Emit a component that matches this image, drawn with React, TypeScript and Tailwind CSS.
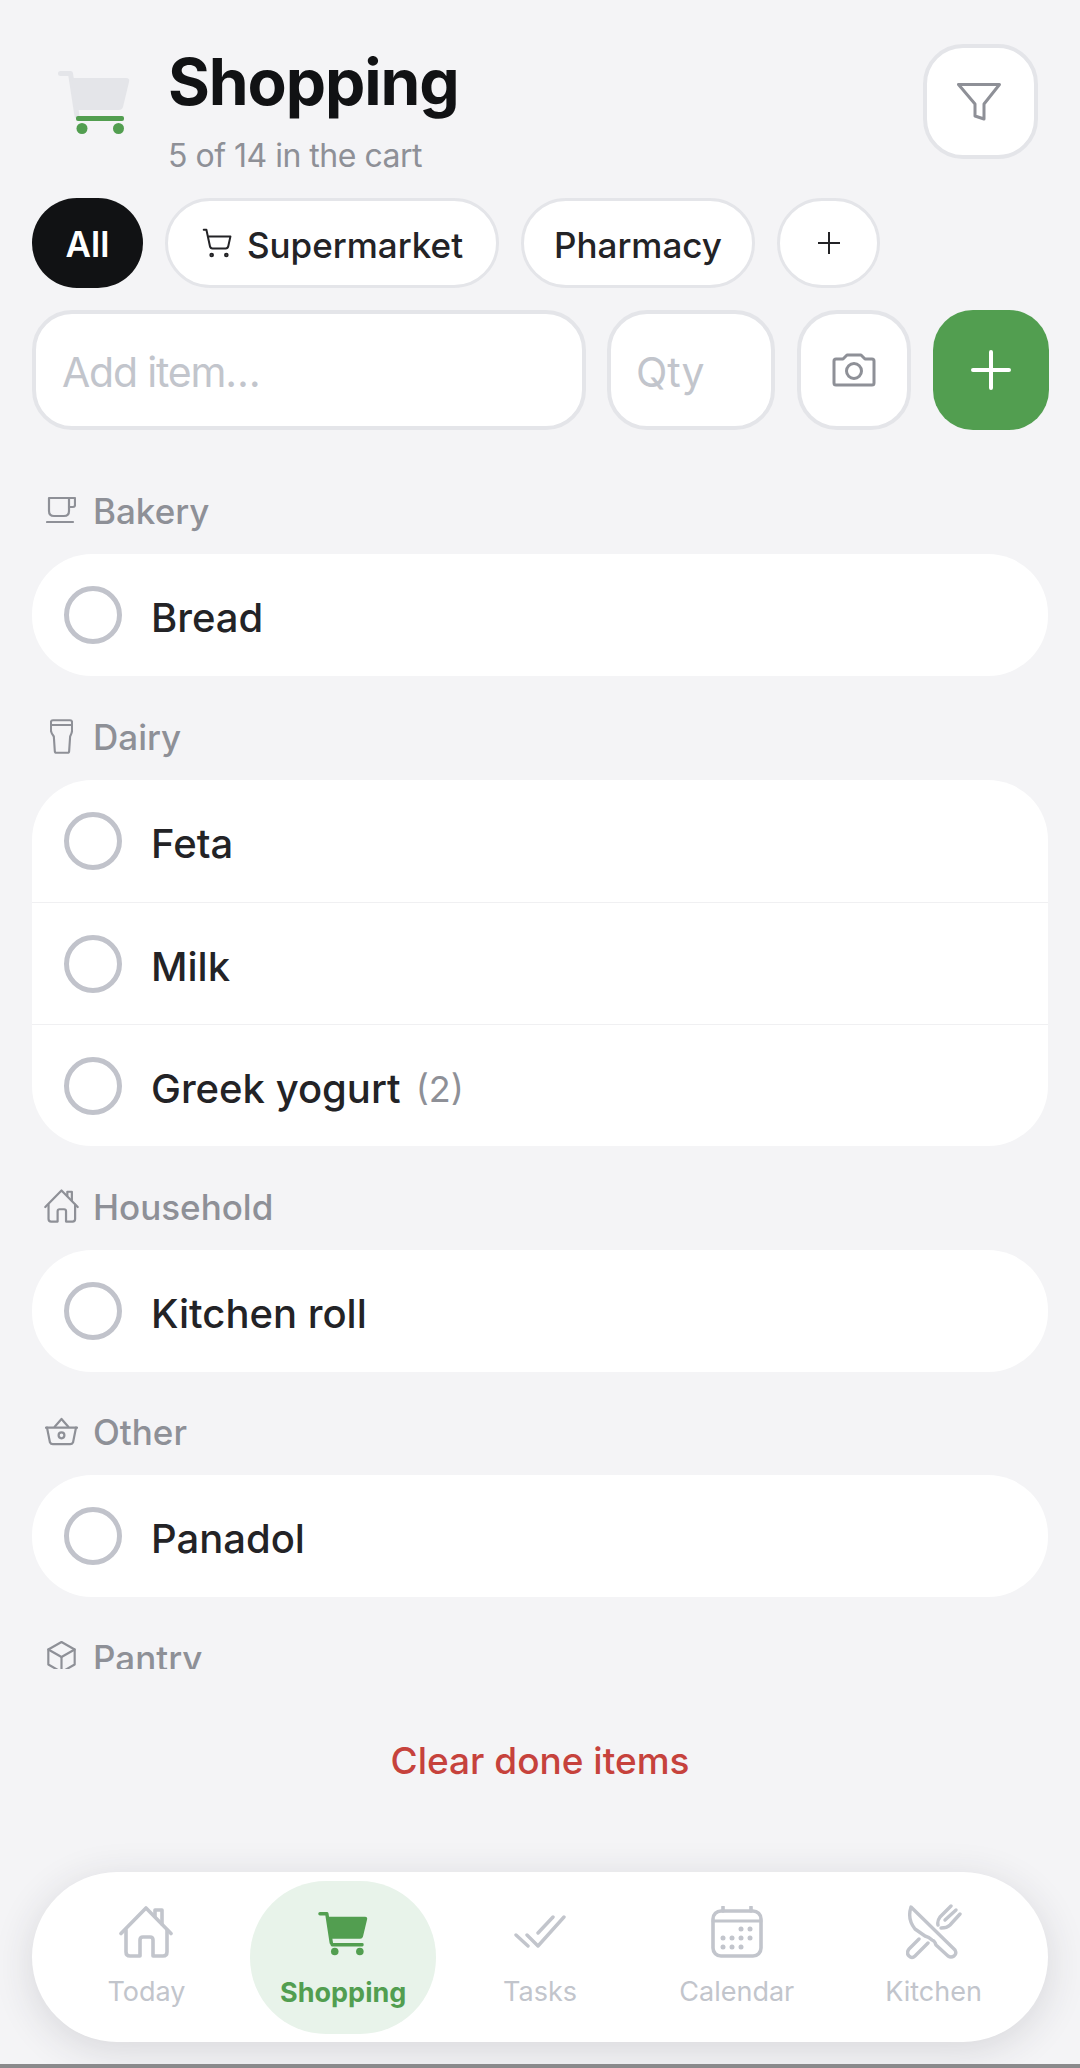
import { ShoppingCart } from "lucide-react";

const font = "font-['Inter',sans-serif]";

const CartIcon = ({ body, bar, className }: { body: string; bar: string; className: string }) => (
  <svg viewBox="0 0 72 64" className={className}>
    <path d="M2.5 2.5H12.5L19 45" fill="none" stroke={body} strokeWidth="5" strokeLinecap="round" strokeLinejoin="round" />
    <path d="M14 7H68Q72 7 71 11L65 36Q64 39 61 39H19Z" fill={body} />
    <rect x="18" y="45" width="48" height="5" rx="2" fill={bar} />
    <circle cx="24" cy="57.5" r="5.5" fill={bar} />
    <circle cx="60.5" cy="57.5" r="5.5" fill={bar} />
  </svg>
);

const HomeIcon = ({ className }: { className: string }) => (
  <svg viewBox="0 0 54 52" fill="none" stroke="currentColor" strokeWidth="3.6" strokeLinecap="round" strokeLinejoin="round" className={className}>
    <path d="M2 27.5L27 2L52 27.5" />
    <path d="M36 10.5V4H43V18" />
    <path d="M7 24V46Q7 50 11 50H21V34Q21 31 24 31H31Q34 31 34 34V50H44Q48 50 48 46V24" />
  </svg>
);

const ChecksIcon = ({ className }: { className: string }) => (
  <svg viewBox="0 0 52 34" fill="none" stroke="currentColor" strokeWidth="3.4" strokeLinecap="round" strokeLinejoin="round" className={className}>
    <path d="M2 20L14 31" />
    <path d="M13 20L24 31L50 2" />
    <path d="M24 18L39 2" />
  </svg>
);

const CalendarIcon = ({ className }: { className: string }) => (
  <svg viewBox="0 0 52 52" fill="none" stroke="currentColor" strokeWidth="3.6" strokeLinecap="round" className={className}>
    <rect x="2" y="5" width="48" height="45" rx="8" />
    <path d="M2 15H50" strokeWidth="3" />
    <path d="M12 1V5M40 1V5" />
    <g fill="currentColor" stroke="none">
      <circle cx="30" cy="23" r="2.5" /><circle cx="39" cy="23" r="2.5" />
      <circle cx="12" cy="32" r="2.5" /><circle cx="21" cy="32" r="2.5" /><circle cx="30" cy="32" r="2.5" /><circle cx="39" cy="32" r="2.5" />
      <circle cx="12" cy="41" r="2.5" /><circle cx="21" cy="41" r="2.5" /><circle cx="30" cy="41" r="2.5" />
    </g>
  </svg>
);

const KitchenIcon = ({ className }: { className: string }) => (
  <svg viewBox="0 0 56 56" fill="none" stroke="currentColor" strokeWidth="3.4" strokeLinecap="round" strokeLinejoin="round" className={className}>
    <path d="M5 3L49 46Q51 50 48 52Q45 54 42 52L30 41Q29 37 26 36Q23 33 19 32L9 25Q1 15 5 3Z" />
    <path d="M13 35L3 45Q0 49 3 52Q6 55 9 52L22 39" />
    <path d="M32 21Q31 17 34 13L45 2" />
    <path d="M39 16L50 6" />
    <path d="M35 24Q41 24 44 21L54 10" />
  </svg>
);

const CupIcon = () => (
  <svg viewBox="0 0 30 28" fill="none" stroke="currentColor" strokeWidth="2.2" strokeLinecap="round" strokeLinejoin="round" className="w-[30px] h-[28px]">
    <path d="M3 2H23V15Q23 20 18 20H8Q3 20 3 15Z" />
    <path d="M23 2H29V9Q29 11 27 11H23" />
    <path d="M1 26H27" />
  </svg>
);

const GlassIcon = () => (
  <svg viewBox="0 0 24 36" fill="none" stroke="currentColor" strokeWidth="2.2" strokeLinecap="round" strokeLinejoin="round" className="w-[23px] h-[35px]">
    <path d="M1 3Q1 1 3 1H21Q23 1 23 3V12Q23 14 21 18L20 33Q20 35 18 35H7Q5 35 5 33L4 18Q1 14 1 12Z" />
    <path d="M1 6H23" />
  </svg>
);

const HouseSmall = () => <HomeIcon className="w-[35px] h-[34px] [&_path]:[stroke-width:3.4px]" />;

const BasketIcon = () => (
  <svg viewBox="0 0 34 30" fill="none" stroke="currentColor" strokeWidth="2.3" strokeLinecap="round" strokeLinejoin="round" className="w-[33px] h-[29px]">
    <path d="M1 11H33" />
    <path d="M2 11L5 26Q6 28 8 28H26Q28 28 29 26L32 11" />
    <path d="M10 10L17 2L24 10" />
    <circle cx="17" cy="19" r="3" />
  </svg>
);

const BoxIcon = () => (
  <svg viewBox="0 0 32 34" fill="none" stroke="currentColor" strokeWidth="2.3" strokeLinecap="round" strokeLinejoin="round" className="w-[31px] h-[32px]">
    <path d="M16 1L30 9V25L16 33L2 25V9Z" />
    <path d="M2 9L16 17L30 9" />
    <path d="M16 17V33" />
  </svg>
);

const Item = ({ name, qty, divider }: { name: string; qty?: string; divider?: boolean }) => (
  <div className={`flex items-center h-[122px] pl-8 ${divider ? "border-t border-[#f0f0f2]" : ""}`}>
    <span className="w-[58px] h-[58px] rounded-full border-[5px] border-[#c1c3cb]" />
    <span className="ml-[29px] pt-[6px] text-[40px] font-[450] text-[#232326]">{name}</span>
    {qty && <span className="ml-[15px] pt-[6px] text-[36px] text-[#8e9097]">{qty}</span>}
  </div>
);

const Section = ({ icon, title, className = "mb-10", children }: { icon: React.ReactNode; title: string; className?: string; children?: React.ReactNode }) => (
  <section className={className}>
    <div className="flex items-center h-10 mb-6 text-[#8e9097]">
      <div className="w-[61px] pr-[3px] flex justify-center">{icon}</div>
      <h2 className="pt-[3px] text-[35px] font-[450]">{title}</h2>
    </div>
    {children && <div className="bg-white rounded-[60px] overflow-hidden">{children}</div>}
  </section>
);

const NavItem = ({ label, children }: { label: string; children: React.ReactNode }) => (
  <div className="flex-1 pt-[2px] flex flex-col items-center text-[#c2c5cc]">
    <div className="h-[56px] flex items-center justify-center">{children}</div>
    <span className="mt-3 text-[27px]">{label}</span>
  </div>
);

export default function App() {
  return (
    <div className={`${font} w-[1080px] h-[2068px] overflow-hidden bg-[#f4f4f6] flex flex-col`}>
      <header className="h-[198px] shrink-0 flex justify-between items-start pt-11 pl-[58px] pr-[42px]">
        <div className="flex items-start">
          <CartIcon body="#e4e5e9" bar="#529e50" className="w-[72px] h-[64px] mt-[27px]" />
          <div className="ml-[38px]">
            <h1 className="text-[64px] leading-[76px] font-bold tracking-[-1.1px] text-[#111214]">Shopping</h1>
            <p className="mt-4 text-[32px] leading-[40px] tracking-[-0.5px] text-[#8e9097]">5 of 14 in the cart</p>
          </div>
        </div>
        <button className="w-[115px] h-[115px] rounded-[40px] bg-white border-4 border-[#e4e5e9] flex items-center justify-center">
          <svg viewBox="0 0 44 38" fill="none" stroke="#8e9097" strokeWidth="3" strokeLinejoin="round" className="w-[44px] h-[38px] mr-[3px]">
            <path d="M1.5 1.5H42.5L27 21V36L18 33V21Z" />
          </svg>
        </button>
      </header>

      <div className="shrink-0 flex h-[90px] gap-[22px] px-8 text-[35px] font-[450] text-[#232326]">
        <button className="w-[111px] pt-[3px] rounded-[45px] bg-[#111214] text-white font-semibold">All</button>
        <button className="w-[334px] flex items-center justify-center gap-[14px] rounded-[45px] bg-white border-[3px] border-[#e4e5e9]">
          <ShoppingCart size={32} strokeWidth={1.5} />
          <span className="pt-[4px]">Supermarket</span>
        </button>
        <button className="w-[234px] pt-[4px] rounded-[45px] bg-white border-[3px] border-[#e4e5e9]">Pharmacy</button>
        <button className="w-[103px] flex items-center justify-center rounded-[45px] bg-white border-[3px] border-[#e4e5e9]">
          <svg viewBox="0 0 22 22" stroke="currentColor" strokeWidth="2" className="w-[22px] h-[22px]"><path d="M11 0V22M0 11H22" /></svg>
        </button>
      </div>

      <div className="shrink-0 mt-[22px] flex h-[120px] gap-[22px] pl-8 pr-[31px] text-[41px] text-[#c2c5cc]">
        <div className="w-[554px] -mr-px flex items-center pl-[26px] pt-[6px] tracking-[-1.2px] rounded-[40px] bg-white border-4 border-[#e4e5e9]">Add item…</div>
        <div className="w-[168px] flex items-center pl-[25px] pt-[6px] rounded-[40px] bg-white border-4 border-[#e4e5e9]">Qty</div>
        <button className="w-[114px] flex items-center justify-center rounded-[40px] bg-white border-4 border-[#e4e5e9]">
          <svg viewBox="0 0 44 34" fill="none" stroke="#8e9097" strokeWidth="3" strokeLinejoin="round" className="w-[44px] h-[34px]">
            <path d="M2 8Q2 6 4 6H11L15 2H29L33 6H40Q42 6 42 8V30Q42 32 40 32H4Q2 32 2 30Z" />
            <circle cx="22" cy="18" r="7.5" />
          </svg>
        </button>
        <button className="w-[116px] flex items-center justify-center rounded-[40px] bg-[#529e50]">
          <svg viewBox="0 0 40 40" stroke="#fff" strokeWidth="4" strokeLinecap="round" className="w-[40px] h-[40px]"><path d="M20 2V38M2 20H38" /></svg>
        </button>
      </div>

      <main className="shrink-0 h-[1239px] overflow-hidden pt-[60px] px-8">
        <Section icon={<CupIcon />} title="Bakery"><Item name="Bread" /></Section>
        <Section icon={<GlassIcon />} title="Dairy">
          <Item name="Feta" />
          <Item name="Milk" divider />
          <Item name="Greek yogurt" qty="(2)" divider />
        </Section>
        <Section icon={<HouseSmall />} title="Household" className="mb-[39px]"><Item name="Kitchen roll" /></Section>
        <Section icon={<BasketIcon />} title="Other"><Item name="Panadol" /></Section>
        <Section icon={<BoxIcon />} title="Pantry" />
      </main>

      <button className="shrink-0 h-[203px] pb-[20px] text-[37px] font-[450] text-[#c6423c]">Clear done items</button>

      <nav className="shrink-0 mx-8 h-[170px] rounded-[85px] bg-white shadow-[0_8px_40px_rgba(40,40,60,0.14)] flex items-center px-4">
        <NavItem label="Today"><HomeIcon className="w-[54px] h-[52px]" /></NavItem>
        <div className="flex-1 flex justify-center">
          <div className="w-[186px] h-[153px] rounded-[76px] bg-[#e8f3ea] flex flex-col items-center text-[#529e50]">
            <div className="h-[56px] mt-[25px] flex items-center justify-center">
              <CartIcon body="#529e50" bar="#529e50" className="w-[50px] h-[44px]" />
            </div>
            <span className="mt-[11px] text-[27px] font-bold">Shopping</span>
          </div>
        </div>
        <NavItem label="Tasks"><ChecksIcon className="w-[52px] h-[34px]" /></NavItem>
        <NavItem label="Calendar"><CalendarIcon className="w-[52px] h-[52px]" /></NavItem>
        <NavItem label="Kitchen"><KitchenIcon className="w-[56px] h-[56px]" /></NavItem>
      </nav>
      <div className="mt-auto h-1 shrink-0 bg-[#8a8a8c]" />
    </div>
  );
}
